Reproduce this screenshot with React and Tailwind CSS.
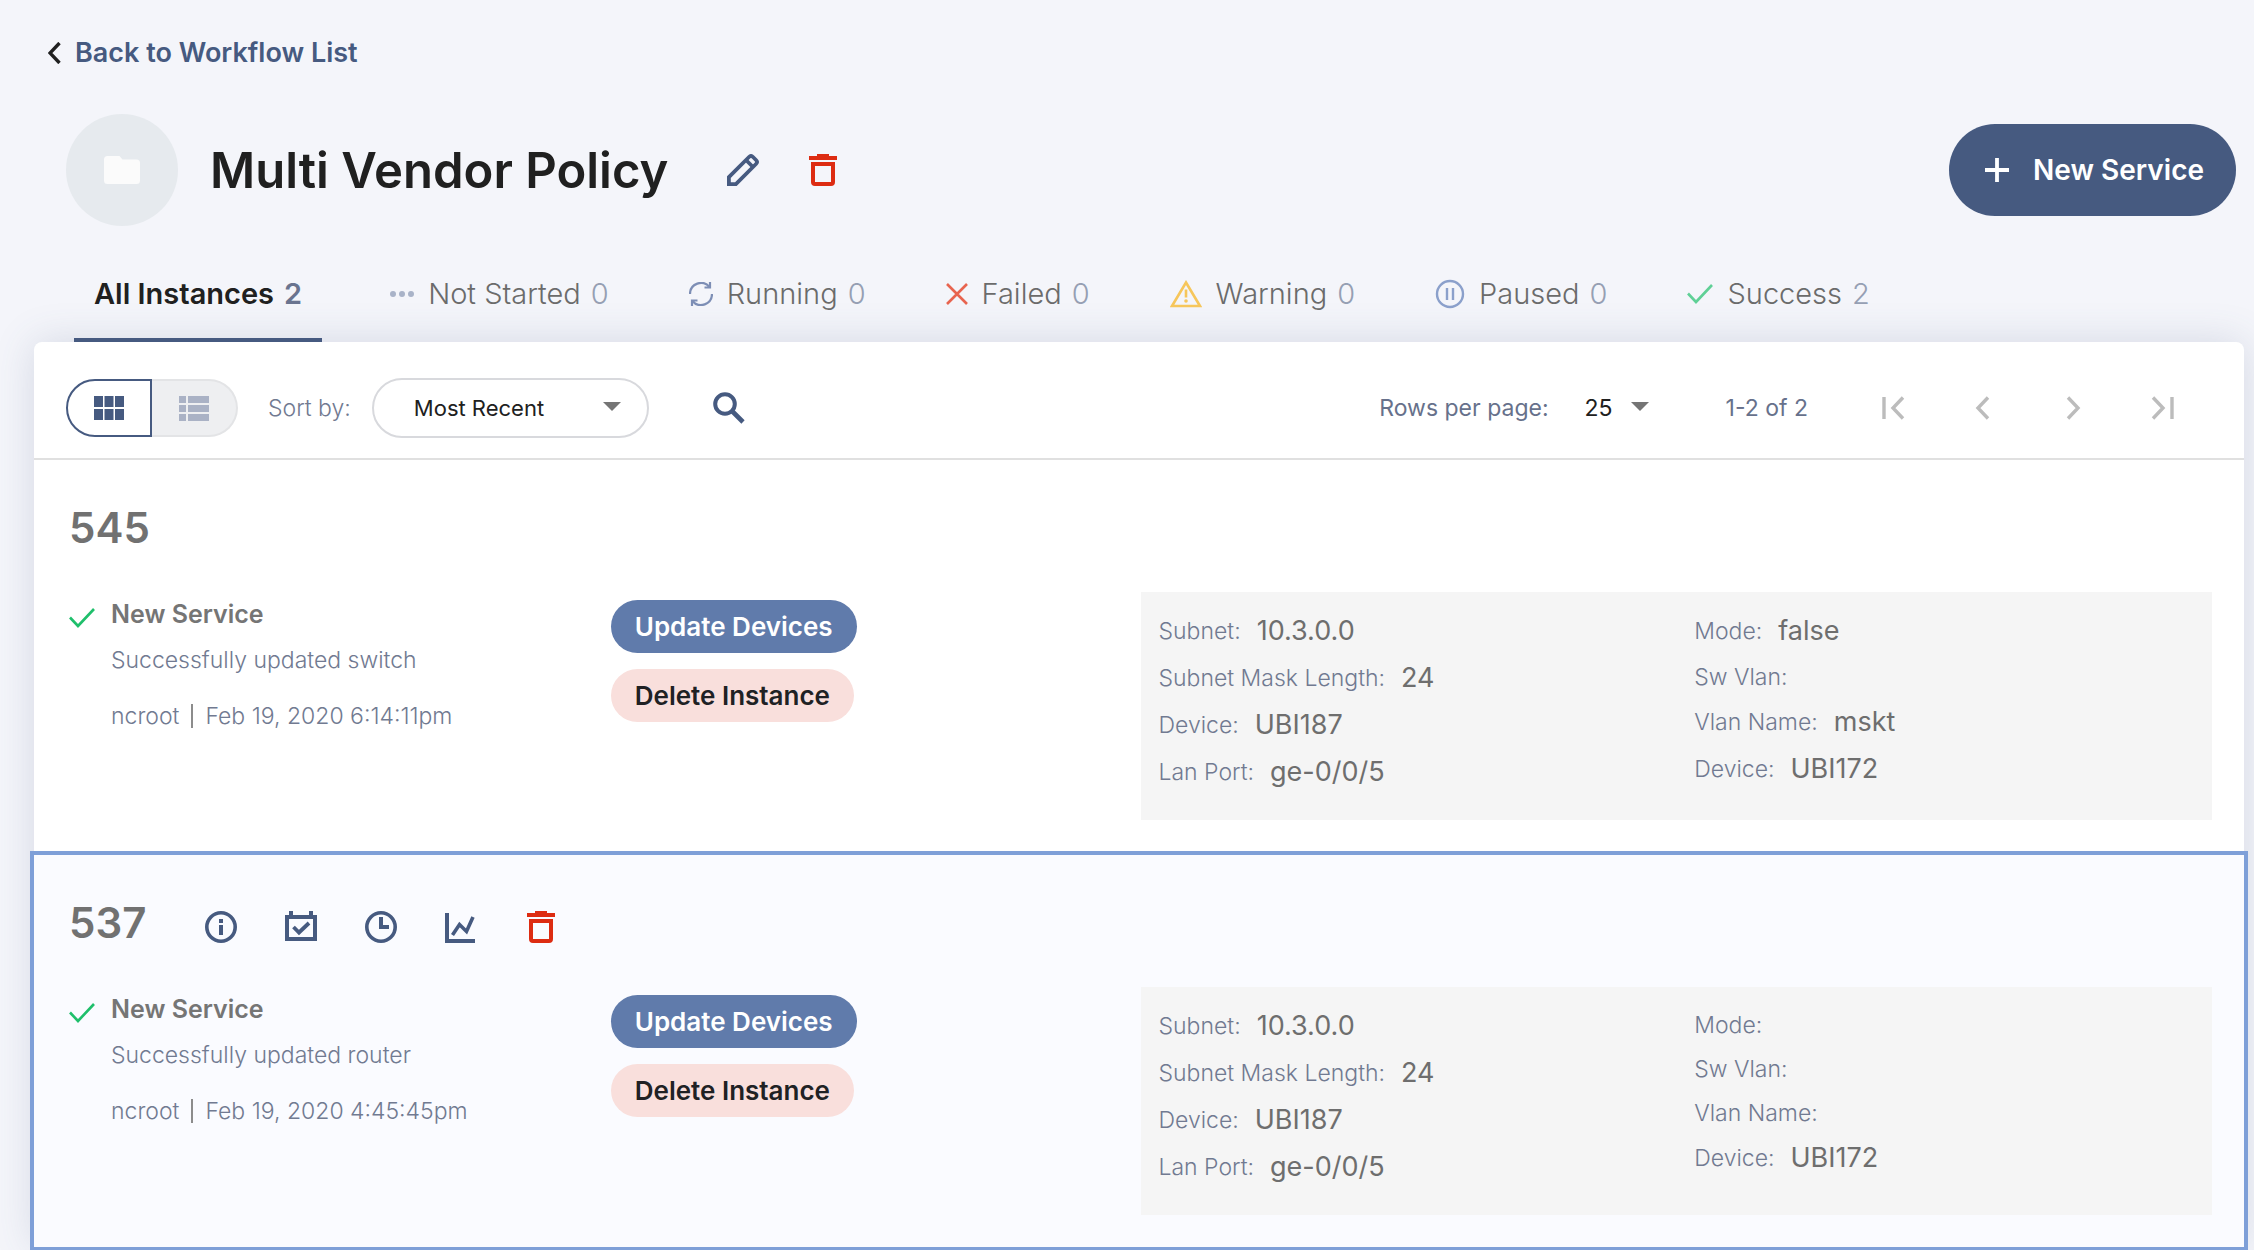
import { useState } from "react";

function TrashIcon() {
  return (
    <svg width="32" height="32" viewBox="0 0 32 32" fill="#dd2c12" aria-hidden="true">
      <path d="M2 2h8V0h12v2h8v4H2z" />
      <path fillRule="evenodd" d="M4 8h24v20a4 4 0 0 1-4 4H8a4 4 0 0 1-4-4zM8 12v16h16V12z" />
    </svg>
  );
}

function PencilIcon() {
  return (
    <svg width="32" height="32" viewBox="0 0 32 32" fill="none" stroke="#465a80" strokeWidth="3.8" aria-hidden="true">
      <path d="M1.9 30.1v-7L22 3q2-2 4 0l3 3q2 2 0 4L8.900 30.100z" />
      <path d="M19 6l7 7" />
    </svg>
  );
}

function FolderIcon() {
  return (
    <svg width="36" height="28" viewBox="0 0 36 28" fill="#fbfbfb" aria-hidden="true">
      <path d="M3.500 0h12l3 3.500h14A3.500 3.500 0 0 1 36 7v17.500a3.500 3.500 0 0 1-3.500 3.500h-29A3.500 3.500 0 0 1 0 24.500v-21A3.500 3.500 0 0 1 3.500 0z" />
    </svg>
  );
}

function DotsIcon() {
  return (
    <svg width="24" height="28" viewBox="0 0 24 28" fill="#a9b3c8" aria-hidden="true">
      <circle cx="3" cy="14" r="3" />
      <circle cx="12" cy="14" r="3" />
      <circle cx="21" cy="14" r="3" />
    </svg>
  );
}

function RefreshIcon() {
  return (
    <svg width="24" height="24" viewBox="0 0 24 24" fill="none" stroke="#7d8eb5" strokeWidth="2.200" aria-hidden="true">
      <path d="M1 12A11 11 0 0 1 20.500 5M21 0v5.500h-5.500" />
      <path d="M23 12A11 11 0 0 1 3.500 19M3 24v-5.500h5.500" />
    </svg>
  );
}

function CrossIcon() {
  return (
    <svg width="22" height="22" viewBox="0 0 22 22" fill="none" stroke="#e8644f" strokeWidth="2.600" aria-hidden="true">
      <path d="M1 1l20 20M21 1L1 21" />
    </svg>
  );
}

function WarningIcon() {
  return (
    <svg width="32" height="28" viewBox="0 0 32 28" fill="none" stroke="#f6c65b" strokeWidth="2.600" aria-hidden="true">
      <path d="M16 2.500L30 26H2z" />
      <path d="M16 9.500v8" />
      <circle cx="16" cy="21" r="1.800" fill="#f6c65b" stroke="none" />
    </svg>
  );
}

function PausedIcon() {
  return (
    <svg width="30" height="30" viewBox="0 0 30 30" fill="none" stroke="#8ba0cb" strokeWidth="2.400" aria-hidden="true">
      <circle cx="15" cy="15" r="13" />
      <path d="M12 9v12M18 9v12" />
    </svg>
  );
}

function CheckIcon({ color }) {
  return (
    <svg width="26" height="20" viewBox="0 0 26 20" fill="none" stroke={color} strokeWidth="2.600" aria-hidden="true">
      <path d="M1 9.500l8 8.500L25 1" />
    </svg>
  );
}

function SearchIcon() {
  return (
    <svg width="32" height="32" viewBox="0 0 32 32" fill="none" stroke="#465a80" strokeWidth="4" aria-hidden="true">
      <circle cx="12" cy="12" r="9.800" />
      <path d="M18.500 18.500L30 30" strokeWidth="4.600" />
    </svg>
  );
}

function CaretIcon() {
  return (
    <svg width="18" height="9" viewBox="0 0 18 9" fill="#757575" aria-hidden="true">
      <path d="M0 0h18L9 9z" />
    </svg>
  );
}

function GridIcon() {
  return (
    <svg width="30" height="24" viewBox="0 0 30 24" fill="#465a80" aria-hidden="true">
      <path d="M0 0h9v11H0zM10.500 0h9v11h-9zM21 0h9v11h-9zM0 13h9v11H0zM10.500 13h9v11h-9zM21 13h9v11h-9z" />
    </svg>
  );
}

function ListIcon() {
  return (
    <svg width="30" height="25" viewBox="0 0 30 25" fill="#aab2c5" aria-hidden="true">
      <path d="M0 0h7v7H0zM9 0h21v7H9zM0 9h7v7H0zM9 9h21v7H9zM0 18h7v7H0zM9 18h21v7H9z" />
    </svg>
  );
}

function InfoIcon() {
  return (
    <svg width="32" height="32" viewBox="0 0 32 32" fill="#465a80" aria-hidden="true">
      <circle cx="16" cy="16" r="14.200" fill="none" stroke="#465a80" strokeWidth="3.600" />
      <path d="M14 8h4v4h-4zM14 14h4v10h-4z" />
    </svg>
  );
}

function CalendarIcon() {
  return (
    <svg width="32" height="32" viewBox="0 0 32 32" fill="#465a80" aria-hidden="true">
      <path fillRule="evenodd" d="M4 0h4v4h16V0h4v4h4v26H0V4h4zM4 8v18h24V8z" />
      <path d="M8.500 16l5.500 5.500L24 12" fill="none" stroke="#465a80" strokeWidth="3.800" />
    </svg>
  );
}

function ClockIcon() {
  return (
    <svg width="32" height="32" viewBox="0 0 32 32" fill="#465a80" aria-hidden="true">
      <circle cx="16" cy="16" r="14.200" fill="none" stroke="#465a80" strokeWidth="3.600" />
      <path d="M14 6h4v8h6v4H14z" />
    </svg>
  );
}

function ChartIcon() {
  return (
    <svg width="32" height="32" viewBox="0 0 32 32" fill="none" stroke="#465a80" strokeWidth="4" aria-hidden="true">
      <path d="M2 2v28h28" />
      <path d="M7.500 24l7-10.500 7 7L28 6" strokeWidth="3.600" />
    </svg>
  );
}

function PageArrow({ label, d }) {
  return (
    <button type="button" aria-label={label} className="flex w-[90px] items-center justify-center">
      <svg width="24" height="24" viewBox="0 0 24 24" fill="none" stroke="#bcbcbc" strokeWidth="3.400" aria-hidden="true">
        <path d={d} />
      </svg>
    </button>
  );
}

const tabs = [
  { label: "All Instances", count: 2 },
  { label: "Not Started", count: 0, icon: <DotsIcon /> },
  { label: "Running", count: 0, icon: <RefreshIcon /> },
  { label: "Failed", count: 0, icon: <CrossIcon /> },
  { label: "Warning", count: 0, icon: <WarningIcon /> },
  { label: "Paused", count: 0, icon: <PausedIcon /> },
  { label: "Success", count: 2, icon: <CheckIcon color="#5fd096" /> },
];

const instances = [
  {
    id: "545",
    message: "Successfully updated switch",
    date: "Feb 19, 2020 6:14:11pm",
    left: [["Subnet", "10.3.0.0"], ["Subnet Mask Length", "24"], ["Device", "UBI187"], ["Lan Port", "ge-0/0/5"]],
    right: [["Mode", "false"], ["Sw Vlan", ""], ["Vlan Name", "mskt"], ["Device", "UBI172"]],
  },
  {
    id: "537",
    message: "Successfully updated router",
    date: "Feb 19, 2020 4:45:45pm",
    active: true,
    left: [["Subnet", "10.3.0.0"], ["Subnet Mask Length", "24"], ["Device", "UBI187"], ["Lan Port", "ge-0/0/5"]],
    right: [["Mode", ""], ["Sw Vlan", ""], ["Vlan Name", ""], ["Device", "UBI172"]],
  },
];

const actions = [
  ["Details", <InfoIcon />],
  ["Schedule", <CalendarIcon />],
  ["History", <ClockIcon />],
  ["Statistics", <ChartIcon />],
  ["Delete", <TrashIcon />],
];

function Details({ items }) {
  return (
    <dl className="px-[18px]">
      {items.map(([name, value]) => (
        <div key={name} className={value ? "flex h-[47px] items-center gap-4" : "flex h-11 items-center"}>
          <dt className="text-[23px] font-light text-[#717a91]">{name}:</dt>
          <dd className="text-[27px] text-[#6e6e6e]">{value}</dd>
        </div>
      ))}
    </dl>
  );
}

function Instance({ item }) {
  return (
    <article
      className={
        item.active
          ? "relative bg-[#fafbff] pr-8 pb-8 pl-[35px] outline-4 outline-[#7e9fd8]"
          : "bg-white pr-8 pb-8 pl-[35px]"
      }
    >
      <div className="flex h-[132px] items-center pt-1">
        <h2 className="text-[42px] leading-none font-semibold text-[#717171]">{item.id}</h2>
        {item.active && (
          <div className="ml-[59px] flex gap-12 pt-2">
            {actions.map(([label, icon]) => (
              <button key={label} type="button" aria-label={label}>{icon}</button>
            ))}
          </div>
        )}
      </div>
      <div className="grid grid-cols-2">
        <div className="grid grid-cols-2 pt-2">
          <div className="flex items-start gap-4">
            <span className="pt-2"><CheckIcon color="#1fbf6b" /></span>
            <div>
              <h3 className="text-[25px] leading-7 font-semibold text-[#757575]">New Service</h3>
              <p className="mt-4 text-[23px] leading-8 font-light text-[#717a91]">{item.message}</p>
              <p className="mt-6 flex items-center gap-3 text-[23px] leading-8 font-light text-[#717a91]">
                <span>ncroot</span>
                <span className="h-6 w-0.5 bg-[#8c8c8c]" />
                <span>{item.date}</span>
              </p>
            </div>
          </div>
          <div className="flex flex-col items-start gap-4 pl-1.5">
            <button type="button" className="h-[53px] rounded-full bg-[#607bab] px-6 text-[26px] font-semibold text-white">
              Update Devices
            </button>
            <button type="button" className="h-[53px] rounded-full bg-[#f9dfdc] px-6 text-[26px] font-semibold text-[#202124]">
              Delete Instance
            </button>
          </div>
        </div>
        <div className="grid grid-cols-2 bg-[#f5f5f5] pt-4 pb-6">
          <Details items={item.left} />
          <Details items={item.right} />
        </div>
      </div>
    </article>
  );
}

export default function App() {
  const [sort, setSort] = useState("Most Recent");
  const [rows, setRows] = useState("25");
  return (
    <div className="min-h-screen bg-[#f4f5fa] pr-2.5 pl-[34px] font-['Inter','Roboto',sans-serif] text-[#202020]">
      <nav className="flex h-[106px] items-center pl-3.5">
        <a href="#workflows" className="flex items-center gap-3.5 text-[27px] font-semibold text-[#465a80]">
          <svg width="13" height="22" viewBox="0 0 13 22" fill="none" stroke="#202020" strokeWidth="3.400" aria-hidden="true">
            <path d="M11.500 1L2 11l9.500 10" />
          </svg>
          Back to Workflow List
        </a>
      </nav>
      <header className="flex h-32 items-center pr-2 pl-8">
        <div className="flex size-28 items-center justify-center rounded-full bg-[#e6eaee]">
          <FolderIcon />
        </div>
        <h1 className="ml-8 text-[49px] leading-none font-semibold">Multi Vendor Policy</h1>
        <button type="button" aria-label="Edit" className="ml-[59px]"><PencilIcon /></button>
        <button type="button" aria-label="Delete" className="ml-12"><TrashIcon /></button>
        <button
          type="button"
          className="ml-auto flex h-[92px] items-center gap-6 rounded-full bg-[#465a80] pr-8 pl-9 text-[28px] font-semibold text-white"
        >
          <svg width="24" height="24" viewBox="0 0 24 24" fill="none" stroke="#fff" strokeWidth="3.800" aria-hidden="true">
            <path d="M12 0v24M0 12h24" />
          </svg>
          New Service
        </button>
      </header>
      <div role="tablist" className="mt-4 flex h-[92px] items-stretch pl-10">
        {tabs.map((tab, i) => (
          <button
            key={tab.label}
            type="button"
            role="tab"
            aria-selected={i === 0}
            className={
              i === 0
                ? "mr-7 flex items-center border-b-4 border-[#465a80] px-5 text-[29px] font-semibold"
                : "flex items-center border-b-4 border-transparent px-10 text-[29px] font-light text-[#6b6b6b]"
            }
          >
            {tab.icon && <span className="mr-3.5 flex">{tab.icon}</span>}
            {tab.label}
            <span className={i === 0 ? "ml-2.5 text-[#6a748f]" : "ml-2.5 text-[#969fb3]"}>{tab.count}</span>
          </button>
        ))}
      </div>
      <main className="rounded-lg bg-white shadow-[0_0_40px_rgba(70,90,128,0.18)]">
        <div className="flex h-[118px] items-center border-b-2 border-[#e0e0e0] pt-4 pr-9 pl-8">
          <div className="flex h-[58px]">
            <button
              type="button"
              aria-label="Grid view"
              className="flex w-[86px] items-center justify-center rounded-l-full border-2 border-[#465a80] bg-white"
            >
              <GridIcon />
            </button>
            <button
              type="button"
              aria-label="List view"
              className="flex w-[86px] items-center justify-center rounded-r-full border-2 border-l-0 border-[#e3e4e6] bg-[#eeeff1]"
            >
              <ListIcon />
            </button>
          </div>
          <label htmlFor="sort" className="ml-[30px] text-[23px] font-light text-[#717a91]">Sort by:</label>
          <div className="ml-[21px] grid w-[277px] items-center">
            <select
              id="sort"
              value={sort}
              onChange={(e) => setSort(e.target.value)}
              className="col-start-1 row-start-1 h-[60px] w-full appearance-none rounded-full border-2 border-[#d8d9dd] bg-white px-10 text-[22px]"
            >
              <option>Most Recent</option>
              <option>Oldest</option>
            </select>
            <span className="pointer-events-none col-start-1 row-start-1 mr-7 mb-1 justify-self-end"><CaretIcon /></span>
          </div>
          <button type="button" aria-label="Search" className="ml-16"><SearchIcon /></button>
          <label htmlFor="rows" className="ml-auto text-[23px] text-[#67718b]">Rows per page:</label>
          <div className="ml-9 grid w-16 items-center">
            <select
              id="rows"
              value={rows}
              onChange={(e) => setRows(e.target.value)}
              className="col-start-1 row-start-1 h-10 w-full appearance-none text-[23px]"
            >
              <option>25</option>
              <option>50</option>
            </select>
            <span className="pointer-events-none col-start-1 row-start-1 mb-1 justify-self-end"><CaretIcon /></span>
          </div>
          <span className="ml-[77px] text-[23px] text-[#67718b]">1-2 of 2</span>
          <div className="ml-10 flex">
            <PageArrow label="First page" d="M3 1v22M22 1.500L12 12l10 10.500" />
            <PageArrow label="Previous page" d="M17 1.500L7 12l10 10.500" />
            <PageArrow label="Next page" d="M7 1.500L17 12L7 22.500" />
            <PageArrow label="Last page" d="M2 1.500L12 12L2 22.500M21 1v22" />
          </div>
        </div>
        <div className="flex flex-col gap-[3px]">
          {instances.map((item) => (
            <Instance key={item.id} item={item} />
          ))}
        </div>
      </main>
    </div>
  );
}
